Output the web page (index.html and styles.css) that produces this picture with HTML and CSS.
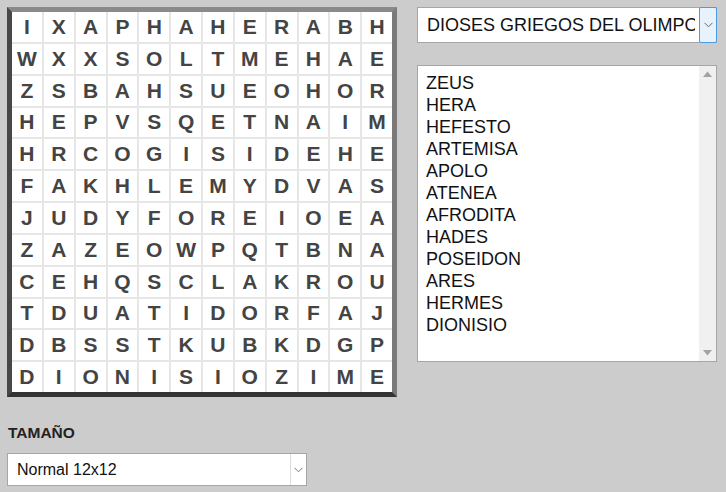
FILE: index.html
```html
<!DOCTYPE html>
<html>
<head>
<meta charset="utf-8">
<link rel="stylesheet" href="styles.css">
</head>
<body>
<div class="page">
  <div class="left">
    <div class="board">
      <div class="grid">
        <span>I</span><span>X</span><span>A</span><span>P</span><span>H</span><span>A</span><span>H</span><span>E</span><span>R</span><span>A</span><span>B</span><span>H</span>
        <span>W</span><span>X</span><span>X</span><span>S</span><span>O</span><span>L</span><span>T</span><span>M</span><span>E</span><span>H</span><span>A</span><span>E</span>
        <span>Z</span><span>S</span><span>B</span><span>A</span><span>H</span><span>S</span><span>U</span><span>E</span><span>O</span><span>H</span><span>O</span><span>R</span>
        <span>H</span><span>E</span><span>P</span><span>V</span><span>S</span><span>Q</span><span>E</span><span>T</span><span>N</span><span>A</span><span>I</span><span>M</span>
        <span>H</span><span>R</span><span>C</span><span>O</span><span>G</span><span>I</span><span>S</span><span>I</span><span>D</span><span>E</span><span>H</span><span>E</span>
        <span>F</span><span>A</span><span>K</span><span>H</span><span>L</span><span>E</span><span>M</span><span>Y</span><span>D</span><span>V</span><span>A</span><span>S</span>
        <span>J</span><span>U</span><span>D</span><span>Y</span><span>F</span><span>O</span><span>R</span><span>E</span><span>I</span><span>O</span><span>E</span><span>A</span>
        <span>Z</span><span>A</span><span>Z</span><span>E</span><span>O</span><span>W</span><span>P</span><span>Q</span><span>T</span><span>B</span><span>N</span><span>A</span>
        <span>C</span><span>E</span><span>H</span><span>Q</span><span>S</span><span>C</span><span>L</span><span>A</span><span>K</span><span>R</span><span>O</span><span>U</span>
        <span>T</span><span>D</span><span>U</span><span>A</span><span>T</span><span>I</span><span>D</span><span>O</span><span>R</span><span>F</span><span>A</span><span>J</span>
        <span>D</span><span>B</span><span>S</span><span>S</span><span>T</span><span>K</span><span>U</span><span>B</span><span>K</span><span>D</span><span>G</span><span>P</span>
        <span>D</span><span>I</span><span>O</span><span>N</span><span>I</span><span>S</span><span>I</span><span>O</span><span>Z</span><span>I</span><span>M</span><span>E</span>
      </div>
    </div>
    <div class="size-label">TAMAÑO</div>
    <div class="select size-select">
      <span class="select-text">Normal 12x12</span>
      <span class="select-btn plain">
        <svg width="9" height="6" viewBox="0 0 9 6"><path d="M0.5 0.8 L4.5 4.8 L8.5 0.8" fill="none" stroke="#777" stroke-width="1"/></svg>
      </span>
    </div>
  </div>
  <div class="right">
    <div class="select theme-select">
      <span class="select-text">DIOSES GRIEGOS DEL OLIMPO</span>
      <span class="select-btn focus">
        <svg width="9" height="6" viewBox="0 0 9 6"><path d="M0.5 0.8 L4.5 4.8 L8.5 0.8" fill="none" stroke="#666" stroke-width="1"/></svg>
      </span>
    </div>
    <div class="words">
      <div class="word-list">
        <div>ZEUS</div>
        <div>HERA</div>
        <div>HEFESTO</div>
        <div>ARTEMISA</div>
        <div>APOLO</div>
        <div>ATENEA</div>
        <div>AFRODITA</div>
        <div>HADES</div>
        <div>POSEIDON</div>
        <div>ARES</div>
        <div>HERMES</div>
        <div>DIONISIO</div>
      </div>
      <div class="scrollbar">
        <svg width="9" height="6" viewBox="0 0 9 6"><path d="M0 6 L4.5 0.5 L9 6 Z" fill="#a3a3a3"/></svg>
        <svg width="9" height="6" viewBox="0 0 9 6"><path d="M0 0 L4.5 5.5 L9 0 Z" fill="#a3a3a3"/></svg>
      </div>
    </div>
  </div>
</div>
</body>
</html>
```

FILE: styles.css
```css
html, body {
  margin: 0;
  padding: 0;
  background: #cccccc;
}
body {
  font-family: "Liberation Sans", Arial, sans-serif;
  width: 726px;
  height: 492px;
  overflow: hidden;
}
.page {
  display: flex;
  padding: 7px 0 0 7px;
}
.left {
  width: 390px;
  display: flex;
  flex-direction: column;
}
.board {
  width: 390px;
  height: 390px;
  box-sizing: border-box;
  border-style: solid;
  border-width: 5px 5px 5px 5px;
  border-top-color: #8a8a8a;
  border-right-color: #7a7a7a;
  border-bottom-color: #333333;
  border-left-color: #474747;
  background: #ffffff;
}
.grid {
  display: grid;
  grid-template-columns: repeat(12, 1fr);
  grid-template-rows: repeat(12, 1fr);
  gap: 2px;
  width: 100%;
  height: 100%;
  background: #e6e6e6;
}
.grid span {
  background: #ffffff;
  display: flex;
  align-items: center;
  justify-content: center;
  font-weight: bold;
  font-size: 21px;
  color: #444444;
}
.size-label {
  margin-top: 27px;
  margin-left: 1px;
  font-weight: bold;
  font-size: 15.5px;
  color: #222222;
  line-height: 17px;
}
.select {
  display: flex;
  align-items: stretch;
  background: #ffffff;
  border: 1px solid #a6a6a6;
  box-sizing: border-box;
}
.size-select {
  margin-top: 12px;
  width: 300px;
  height: 33px;
}
.select-text {
  flex: 1;
  display: flex;
  align-items: center;
  white-space: nowrap;
  overflow: hidden;
  color: #111111;
}
.size-select .select-text {
  font-size: 16px;
  padding-left: 9px;
}
.select-btn {
  width: 16px;
  display: flex;
  align-items: center;
  justify-content: center;
  box-sizing: border-box;
}
.select-btn.plain {
  border-left: 1px solid #dcdcdc;
  width: 16px;
}
.select-btn.focus {
  width: 18px;
  border: 1px solid #4c9ae0;
  background: #e8f2fc;
  margin: -1px -1px -1px 0;
  border-radius: 2px;
}
.right {
  margin-left: 20px;
  width: 300px;
  display: flex;
  flex-direction: column;
}
.theme-select {
  width: 300px;
  height: 36px;
}
.theme-select .select-text {
  font-size: 18px;
  padding-left: 9px;
  margin-right: 4px;
}
.words {
  margin-top: 22px;
  height: 297px;
  box-sizing: border-box;
  border: 1px solid #a6a6a6;
  background: #ffffff;
  display: flex;
}
.word-list {
  flex: 1;
  padding: 6px 0 0 8px;
  font-size: 18px;
  line-height: 22px;
  color: #111111;
}
.scrollbar {
  width: 17px;
  background: #f0f0f0;
  display: flex;
  flex-direction: column;
  justify-content: space-between;
  align-items: center;
  padding: 5px 0 5px 0;
}
```
